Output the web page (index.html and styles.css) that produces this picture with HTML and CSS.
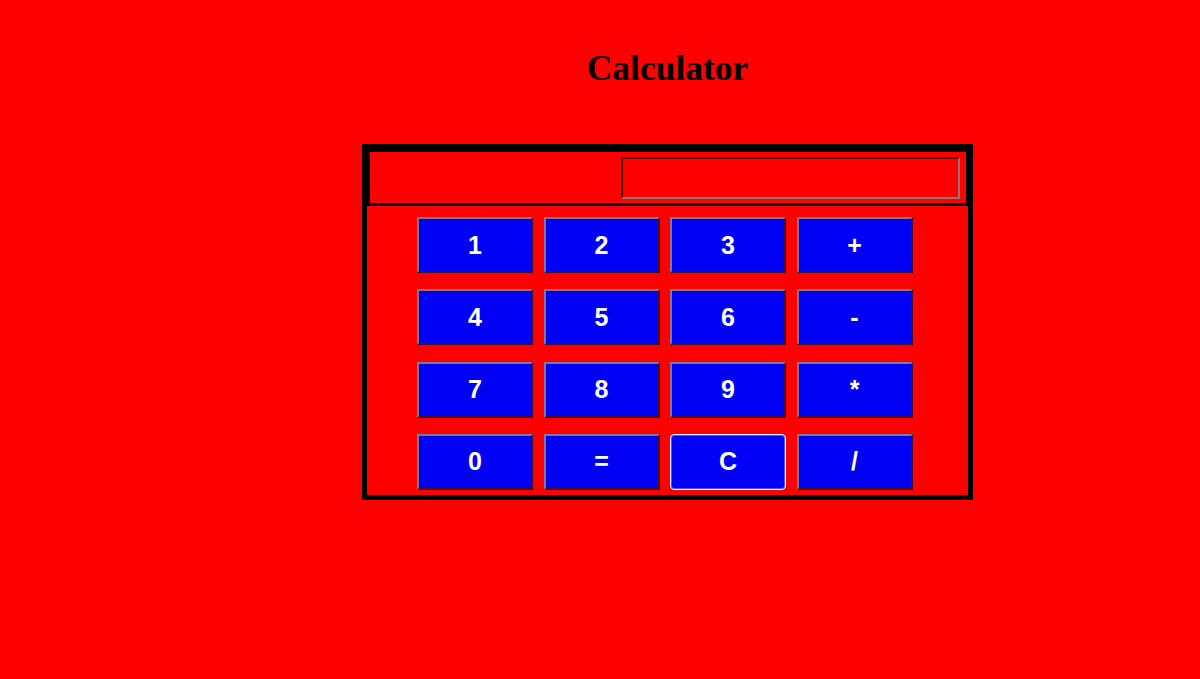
FILE: index.html
```html
<!DOCTYPE html>
<html lang="en">
<head>
<meta charset="utf-8">
<title>Calculator</title>
<link rel="stylesheet" href="styles.css">
</head>
<body>
<div class="page">
  <h1 class="title">Calculator</h1>
  <form class="calc">
    <div class="display-row">
      <input class="display" type="text" name="display">
    </div>
    <div class="keys">
      <button type="button" class="key">1</button>
      <button type="button" class="key">2</button>
      <button type="button" class="key">3</button>
      <button type="button" class="key">+</button>
      <button type="button" class="key">4</button>
      <button type="button" class="key">5</button>
      <button type="button" class="key">6</button>
      <button type="button" class="key">-</button>
      <button type="button" class="key">7</button>
      <button type="button" class="key">8</button>
      <button type="button" class="key">9</button>
      <button type="button" class="key">*</button>
      <button type="button" class="key">0</button>
      <button type="button" class="key">=</button>
      <button type="button" class="key key-focus">C</button>
      <button type="button" class="key">/</button>
    </div>
  </form>
</div>
</body>
</html>
```
FILE: styles.css
```css
html, body {
  margin: 0;
  padding: 0;
}

body {
  background: #ff0000;
  font-family: "Liberation Serif", "Times New Roman", serif;
  color: #000;
}

.page {
  margin-left: 362px;
  width: 611px;
}

.title {
  margin: 48px 0 56px;
  font-size: 35.5px;
  line-height: 40px;
  font-weight: bold;
  text-align: center;
}

.calc {
  margin: 0;
  border: 5px solid #000;
}

.display-row {
  display: flex;
  justify-content: flex-end;
  border-style: solid;
  border-color: #000;
  border-width: 3px 2px 3px 3px;
  padding: 5px 6px 4px 0;
}

.display {
  box-sizing: border-box;
  width: 339px;
  height: 42px;
  margin: 0;
  padding: 0 4px;
  background: transparent;
  border: 2px solid;
  border-color: rgb(92, 8, 8) rgb(140, 118, 118) rgb(140, 118, 118) rgb(92, 8, 8);
  font: 20px "Liberation Sans", Arial, sans-serif;
  color: #000;
  outline: none;
}

.keys {
  display: grid;
  grid-template-columns: repeat(4, 116px);
  grid-auto-rows: 56px;
  column-gap: 10.5px;
  row-gap: 16.33px;
  padding: 11px 0 5px 50px;
}

.key {
  box-sizing: border-box;
  margin: 0;
  padding: 0;
  background: #0000f5;
  color: #fff;
  border: 2px solid;
  border-color: rgb(132, 118, 140) rgb(64, 16, 48) rgb(64, 16, 48) rgb(132, 118, 140);
  font-family: "Liberation Sans", Arial, sans-serif;
  font-size: 25px;
  font-weight: bold;
}

.key-focus {
  border: 1px solid #f2f2ff;
  border-radius: 4px;
  box-shadow: inset 0 0 0 1px #3a5cff;
}
```
